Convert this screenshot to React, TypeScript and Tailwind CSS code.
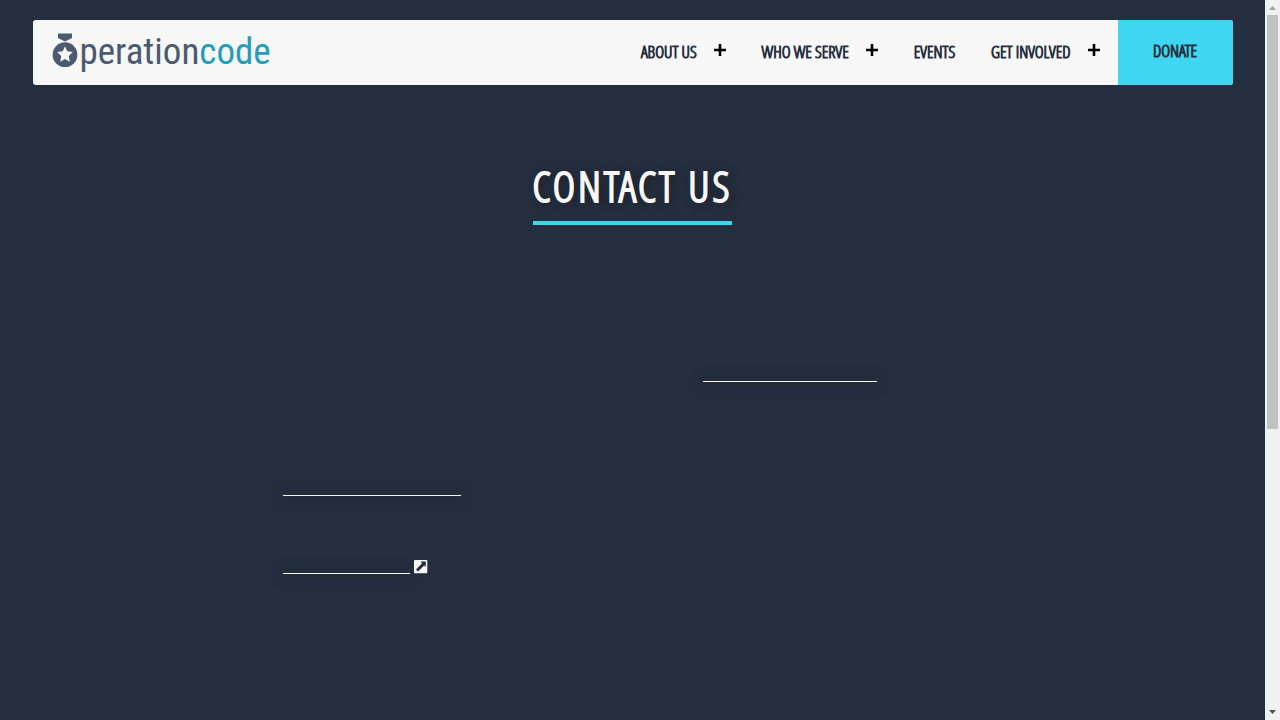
type NavItem = { label: string; expandable: boolean };

const navItems: NavItem[] = [
  { label: 'About Us', expandable: true },
  { label: 'Who We Serve', expandable: true },
  { label: 'Events', expandable: false },
  { label: 'Get Involved', expandable: true },
];

function Medal() {
  return (
    <svg width="26" height="35" viewBox="0 0 26 35" fill="none" aria-hidden="true">
      <path d="M6 .5H20V5L13.6 8.3H12.4L6 5Z" fill="#4a5a70" />
      <circle cx="13" cy="21.7" r="12.4" fill="#4a5a70" />
      <path
        d="M13 13.3L15.3 18.3L20.8 19L16.8 23L17.8 28.8L13 26L8.2 28.8L9.2 23L5.2 19L10.7 18.3Z"
        fill="#f7f7f7"
      />
    </svg>
  );
}

function Logo() {
  return (
    <a href="#home" aria-label="Operation Code" className="ml-[19px] flex items-center gap-0.5 pb-1">
      <Medal />
      <span className="pt-0.5 font-['Roboto_Condensed','Liberation_Sans_Narrow',sans-serif] text-[37px] leading-10 text-[#4a5a70]">
        peration<span className="text-[#249cbc]">code</span>
      </span>
    </a>
  );
}

function Plus() {
  return (
    <svg width="12" height="12" viewBox="0 0 12 12" aria-hidden="true">
      <path d="M4.7 0H7.3V4.7H12V7.3H7.3V12H4.7V7.3H0V4.7H4.7Z" fill="#000" />
    </svg>
  );
}

function Header() {
  return (
    <header className="mx-auto flex h-[65px] w-full max-w-[1200px] items-stretch justify-between overflow-hidden rounded-[3px] bg-[#f7f7f7]">
      <Logo />
      <nav className="flex items-stretch font-['Open_Sans_Condensed_Light','Roboto_Condensed',sans-serif] text-[17px] uppercase text-[#252e3e] [-webkit-text-stroke:1px_#252e3e]">
        {navItems.map((item) => (
          <div key={item.label} className="flex items-center px-[18px] pb-0.5">
            <a href="#menu">{item.label}</a>
            {item.expandable && (
              <button type="button" aria-label={'Open ' + item.label} className="ml-[17px] pb-1">
                <Plus />
              </button>
            )}
          </div>
        ))}
        <a href="#donate" className="flex w-[115px] items-center justify-center bg-[#3ed6f0] pb-1">
          Donate
        </a>
      </nav>
    </header>
  );
}

function ExternalIcon() {
  return (
    <svg width="14" height="14" viewBox="0 0 14 14" aria-hidden="true">
      <rect width="13.3" height="13.3" rx="1" fill="#f7f7f7" />
      <path d="M6.4 1.6H11.8V7L10.2 5.5L4 11.5L2 9.5L8.1 3.3Z" fill="#252e3e" />
    </svg>
  );
}

function Rule({ className }: { className: string }) {
  return <span className={'h-px bg-[#f7f7f7] shadow-[0_0_12px_1px_#20262f] ' + className} />;
}

function Scrollbar() {
  return (
    <div aria-hidden="true" className="flex h-screen w-[15px] shrink-0 flex-col items-center bg-[#f1f1f1]">
      <svg width="15" height="15" viewBox="0 0 15 15">
        <path d="M4 10L7.5 6L11 10Z" fill="#a3a3a3" />
      </svg>
      <div className="flex w-[11px] grow flex-col">
        <div className="h-3/5 bg-[#c1c1c1]" />
      </div>
      <svg width="15" height="15" viewBox="0 0 15 15">
        <path d="M4 5L7.5 9L11 5Z" fill="#505050" />
      </svg>
    </div>
  );
}

export default function App() {
  return (
    <div className="flex min-h-screen bg-[#252e3e]">
      <div className="flex min-w-0 grow flex-col px-8 pt-5">
        <Header />
        <main className="flex flex-col items-center pt-[70px]">
          <h1 className="border-b-4 border-[#3ed6f0] pb-1 font-['Open_Sans_Condensed_Light','Roboto_Condensed',sans-serif] text-[43px] uppercase leading-[62px] tracking-[3px] text-[#f7f7f7] [-webkit-text-stroke:2px_#f7f7f7] [text-shadow:2px_2px_10px_#10141a]">
            Contact Us
          </h1>
          <div className="grid w-full max-w-[700px] grid-cols-[3fr_2fr] pt-[137px]">
            <div className="flex flex-col items-start gap-[58px] pt-[114px]">
              <a href="#mail" aria-label="Email us" className="flex h-5 items-end">
                <Rule className="w-[178px]" />
              </a>
              <a href="#chat" aria-label="Join our chat" className="flex h-5 items-end gap-1">
                <Rule className="w-[127px]" />
                <ExternalIcon />
              </a>
            </div>
            <div className="flex flex-col items-start">
              <a href="#faq" aria-label="Frequently asked questions" className="flex h-5 items-end">
                <Rule className="w-[174px]" />
              </a>
            </div>
          </div>
        </main>
      </div>
      <Scrollbar />
    </div>
  );
}
